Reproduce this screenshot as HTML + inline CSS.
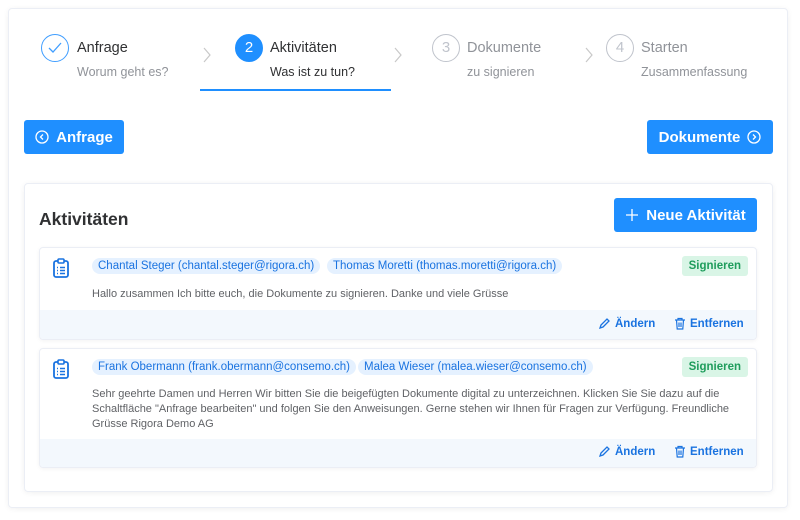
<!DOCTYPE html>
<html><head><meta charset="utf-8"><style>
*{box-sizing:border-box;margin:0;padding:0}
body{width:800px;height:520px;background:#fff;font-family:"Liberation Sans",Arial,sans-serif;position:relative;overflow:hidden;color:#303133}
.a{position:absolute}
.panel{left:8px;top:8px;width:780px;height:500px;border:1px solid #ebeef5;border-radius:4px;box-shadow:0 1px 6px rgba(0,0,0,.06)}
.circ{width:28px;height:28px;border-radius:50%;border:1px solid #c0c4cc;color:#c0c4cc;font-size:15px;text-align:center;line-height:26px}
.t{font-size:14.5px;line-height:18px}
.s{font-size:12.5px;line-height:16px;color:#909399}
.btn{background:#1f8fff;color:#fff;font-weight:bold;font-size:15px;border-radius:3px;display:flex;align-items:center;justify-content:center;gap:7px}
.card{left:24px;top:183px;width:749px;height:309px;border:1px solid #ebeef5;border-radius:4px;box-shadow:0 1px 6px rgba(0,0,0,.06)}
.item{left:39px;width:718px;border:1px solid #ebeef5;border-radius:4px;box-shadow:0 1px 4px rgba(0,0,0,.05);overflow:hidden}
.chip{position:absolute;background:#e5f1ff;color:#1a73e0;font-size:11.5px;line-height:16px;height:16px;padding:0 6px;border-radius:8px;white-space:nowrap}
.tag{position:absolute;right:8px;background:#d9f5e6;color:#1f9d5c;font-weight:bold;font-size:11.5px;padding:0 7px;height:20px;line-height:20px;border-radius:3px}
.txt{position:absolute;left:52px;right:12px;font-size:11px;line-height:15px;color:#606266}
.foot{position:absolute;left:0;right:0;bottom:0;background:#f3f8fd}
.act{position:absolute;color:#1a73e0;font-weight:bold;font-size:11.5px;display:flex;align-items:center;gap:4px}
</style></head><body>
<div class="a panel"></div>
<div class="a circ" style="left:41px;top:34px;border-color:#409eff;color:#409eff"><svg width="16" height="16" viewBox="0 0 16 16" style="margin-top:5px"><path d="M2 8l4 4 8-9" fill="none" stroke="#409eff" stroke-width="1.3"/></svg></div>
<div class="a t" style="left:77px;top:39px">Anfrage</div>
<div class="a s" style="left:77px;top:64px">Worum geht es?</div>
<div class="a circ" style="left:235px;top:34px;background:#1f8fff;border-color:#1f8fff;color:#fff">2</div>
<div class="a t" style="left:270px;top:39px">Aktivitäten</div>
<div class="a s" style="left:270px;top:64px;color:#303133">Was ist zu tun?</div>
<div class="a" style="left:200px;top:89px;width:191px;height:2px;background:#1f8fff"></div>
<div class="a circ" style="left:432px;top:34px">3</div>
<div class="a t" style="left:467px;top:39px;color:#909399">Dokumente</div>
<div class="a s" style="left:467px;top:64px">zu signieren</div>
<div class="a circ" style="left:606px;top:34px">4</div>
<div class="a t" style="left:641px;top:39px;color:#909399">Starten</div>
<div class="a s" style="left:641px;top:64px">Zusammenfassung</div>
<svg class="a" style="left:202px;top:47px" width="10" height="16"><path d="M2 1l6 7-6 7" fill="none" stroke="#c8c8c8" stroke-width="1.2"/></svg>
<svg class="a" style="left:393px;top:47px" width="10" height="16"><path d="M2 1l6 7-6 7" fill="none" stroke="#c8c8c8" stroke-width="1.2"/></svg>
<svg class="a" style="left:584px;top:47px" width="10" height="16"><path d="M2 1l6 7-6 7" fill="none" stroke="#c8c8c8" stroke-width="1.2"/></svg>
<div class="a btn" style="left:24px;top:120px;width:100px;height:34px"><svg width="14" height="14" viewBox="0 0 14 14"><circle cx="7" cy="7" r="6" fill="none" stroke="#fff" stroke-width="1.3"/><path d="M8 4.5L5.5 7 8 9.5" fill="none" stroke="#fff" stroke-width="1.3"/></svg>Anfrage</div>
<div class="a btn" style="left:647px;top:120px;width:126px;height:34px">Dokumente<svg width="14" height="14" viewBox="0 0 14 14"><circle cx="7" cy="7" r="6" fill="none" stroke="#fff" stroke-width="1.3"/><path d="M6 4.5L8.5 7 6 9.5" fill="none" stroke="#fff" stroke-width="1.3"/></svg></div>
<div class="a card"></div>
<div class="a" style="left:39px;top:209px;font-size:17.5px;font-weight:bold;color:#303133">Aktivitäten</div>
<div class="a btn" style="left:614px;top:198px;width:143px;height:34px"><svg width="14" height="14"><path d="M7 1v12M1 7h12" stroke="#fff" stroke-width="1.3"/></svg>Neue Aktivität</div>

<div class="a item" style="top:247px;height:93px">
 <svg class="a" style="left:12px;top:10px" width="18" height="20" viewBox="0 0 18 20"><rect x="2" y="3" width="14" height="16" rx="2" fill="none" stroke="#1a73e0" stroke-width="1.8"/><rect x="6" y="1" width="6" height="4" rx="1" fill="#fff" stroke="#1a73e0" stroke-width="1.6"/><path d="M5 9.5h1M8 9.5h5M5 12.5h1M8 12.5h5M5 15.5h1M8 15.5h5" stroke="#1a73e0" stroke-width="1.5"/></svg>
 <div class="chip" style="left:52px;top:10px">Chantal Steger (chantal.steger@rigora.ch)</div>
 <div class="chip" style="left:287px;top:10px">Thomas Moretti (thomas.moretti@rigora.ch)</div>
 <div class="tag" style="top:8px">Signieren</div>
 <div class="txt" style="top:39px">Hallo zusammen Ich bitte euch, die Dokumente zu signieren. Danke und viele Grüsse</div>
 <div class="foot" style="height:29px">
  <div class="act" style="left:558px;top:7px"><svg width="13" height="13" viewBox="0 0 13 13"><path d="M2 11l1-3 6-6 2 2-6 6z" fill="none" stroke="#1a73e0" stroke-width="1.3"/></svg>Ändern</div>
  <div class="act" style="left:634px;top:7px"><svg width="12" height="13" viewBox="0 0 12 13"><path d="M1 3h10M4 3V1.5h4V3M2.5 3l.7 9h5.6l.7-9M5 5.5v4.5M7 5.5v4.5" fill="none" stroke="#1a73e0" stroke-width="1.2"/></svg>Entfernen</div>
 </div>
</div>

<div class="a item" style="top:348px;height:120px">
 <svg class="a" style="left:12px;top:10px" width="18" height="20" viewBox="0 0 18 20"><rect x="2" y="3" width="14" height="16" rx="2" fill="none" stroke="#1a73e0" stroke-width="1.8"/><rect x="6" y="1" width="6" height="4" rx="1" fill="#fff" stroke="#1a73e0" stroke-width="1.6"/><path d="M5 9.5h1M8 9.5h5M5 12.5h1M8 12.5h5M5 15.5h1M8 15.5h5" stroke="#1a73e0" stroke-width="1.5"/></svg>
 <div class="chip" style="left:52px;top:10px">Frank Obermann (frank.obermann@consemo.ch)</div>
 <div class="chip" style="left:318px;top:10px">Malea Wieser (malea.wieser@consemo.ch)</div>
 <div class="tag" style="top:8px">Signieren</div>
 <div class="txt" style="top:38px">Sehr geehrte Damen und Herren Wir bitten Sie die beigefügten Dokumente digital zu unterzeichnen. Klicken Sie Sie dazu auf die Schaltfläche "Anfrage bearbeiten" und folgen Sie den Anweisungen. Gerne stehen wir Ihnen für Fragen zur Verfügung. Freundliche Grüsse Rigora Demo AG</div>
 <div class="foot" style="height:28px">
  <div class="act" style="left:558px;top:6px"><svg width="13" height="13" viewBox="0 0 13 13"><path d="M2 11l1-3 6-6 2 2-6 6z" fill="none" stroke="#1a73e0" stroke-width="1.3"/></svg>Ändern</div>
  <div class="act" style="left:634px;top:6px"><svg width="12" height="13" viewBox="0 0 12 13"><path d="M1 3h10M4 3V1.5h4V3M2.5 3l.7 9h5.6l.7-9M5 5.5v4.5M7 5.5v4.5" fill="none" stroke="#1a73e0" stroke-width="1.2"/></svg>Entfernen</div>
 </div>
</div>
</body></html>
